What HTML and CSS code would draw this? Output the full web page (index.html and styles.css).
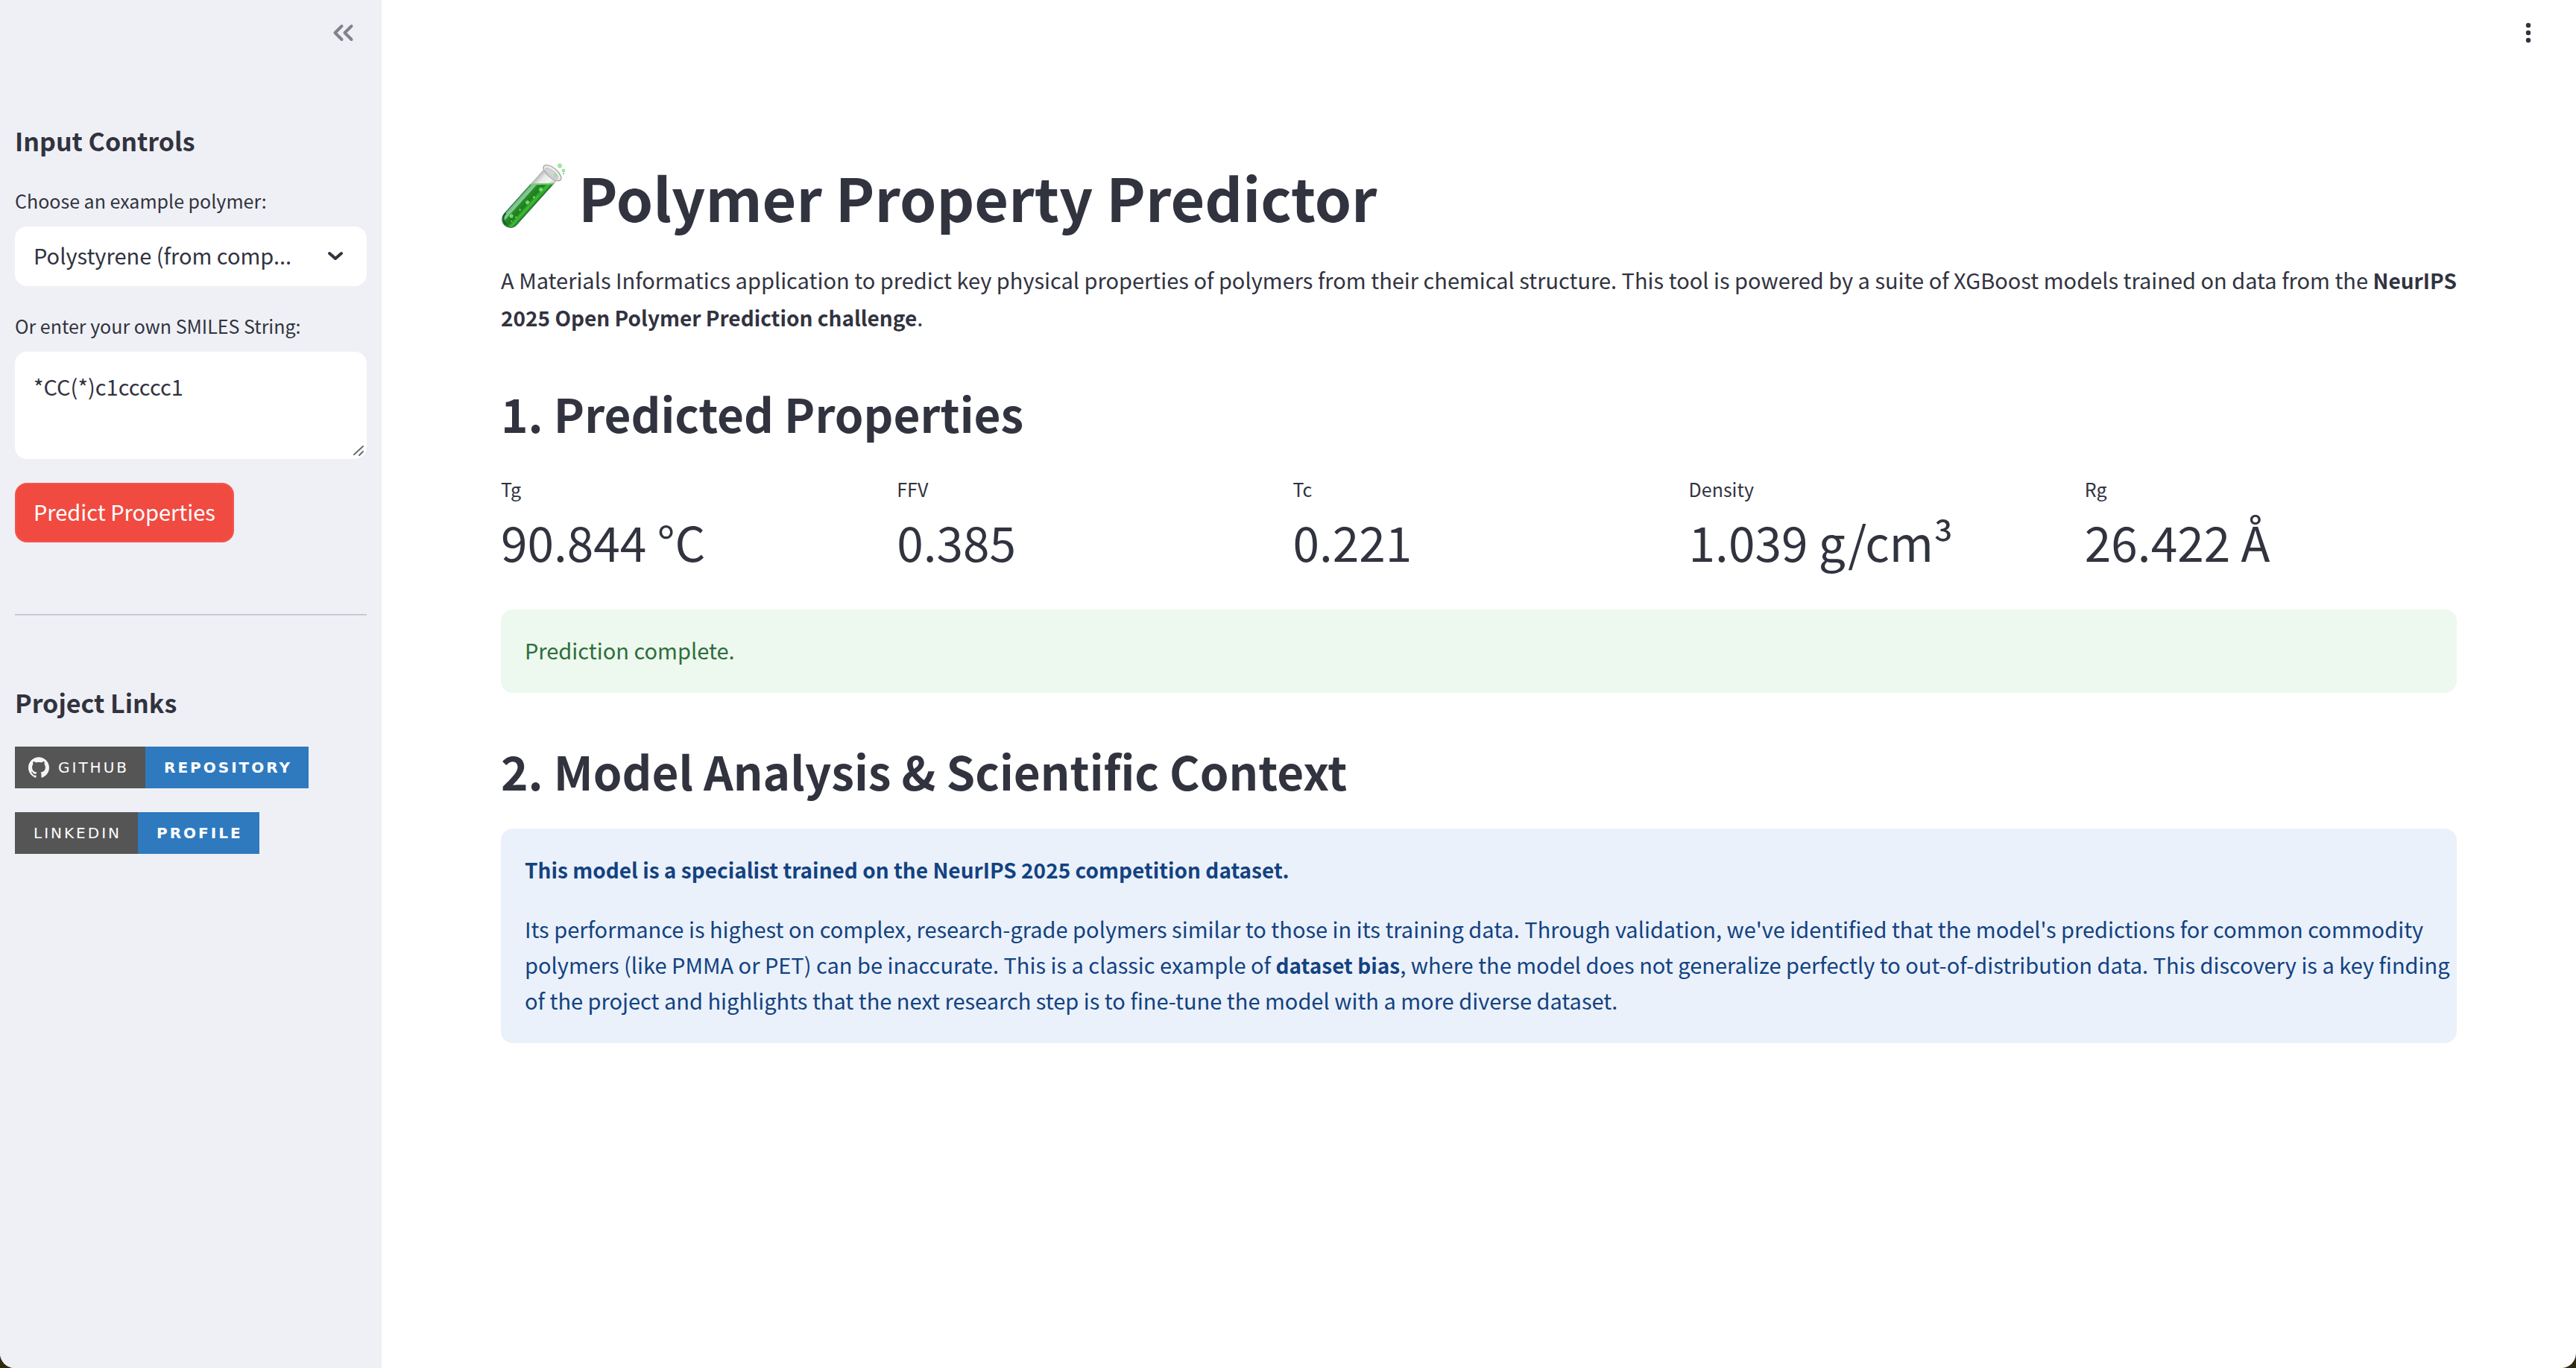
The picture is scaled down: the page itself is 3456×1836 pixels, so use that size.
FILE: index.html
```html
<!DOCTYPE html>
<html lang="en">
<head>
<meta charset="utf-8">
<title>Polymer Property Predictor</title>
<link rel="stylesheet" href="styles.css">
</head>
<body>
<div class="app">
  <aside class="sidebar">
    <div class="sidebar-header">
      <button class="icon-button" type="button" aria-label="Collapse sidebar">
        <svg width="40" height="40" viewBox="0 0 40 40" fill="none" stroke="#808389" stroke-width="4" stroke-linecap="round" stroke-linejoin="round"><path d="M18.500 11L9.500 20l9 9M31.500 11L22.500 20l9 9"/></svg>
      </button>
    </div>
    <h2 class="sidebar-title">Input Controls</h2>
    <label class="label" for="polymer">Choose an example polymer:</label>
    <div class="select-wrap">
      <select class="field select" id="polymer">
        <option>Polystyrene (from comp...</option>
      </select>
      <svg class="select-arrow" width="22" height="14" viewBox="0 0 22 14" fill="none" stroke="#31333f" stroke-width="4" stroke-linecap="round" stroke-linejoin="round"><path d="M3 3l8 7 8-7"/></svg>
    </div>
    <label class="label" for="smiles">Or enter your own SMILES String:</label>
    <div class="textarea-wrap">
      <textarea class="field textarea" id="smiles">*CC(*)c1ccccc1</textarea>
      <svg class="resize-grip" width="16" height="16" viewBox="0 0 16 16" stroke="#6a6a6a" stroke-width="2" stroke-linecap="round"><path d="M2 13L14 2M9 14l5-5"/></svg>
    </div>
    <button class="primary-button" type="button">Predict Properties</button>
    <hr class="divider">
    <h2 class="sidebar-title">Project Links</h2>
    <div class="badges">
      <a class="badge" href="#github">
        <span class="badge-name badge-name-icon"><svg width="28" height="28" viewBox="0 0 24 24" fill="#f5f5f5"><path d="M12 .297c-6.630 0-12 5.373-12 12 0 5.303 3.438 9.800 8.205 11.385.6.113.82-.258.82-.577 0-.285-.01-1.040-.015-2.040-3.338.724-4.042-1.610-4.042-1.610C4.422 18.070 3.633 17.700 3.633 17.700c-1.087-.744.084-.729.084-.729 1.205.084 1.838 1.236 1.838 1.236 1.070 1.835 2.809 1.305 3.495.998.108-.776.417-1.305.76-1.605-2.665-.3-5.466-1.332-5.466-5.930 0-1.310.465-2.380 1.235-3.220-.135-.303-.54-1.523.105-3.176 0 0 1.005-.322 3.300 1.230.96-.267 1.980-.399 3-.405 1.020.006 2.040.138 3 .405 2.280-1.552 3.285-1.230 3.285-1.230.645 1.653.24 2.873.12 3.176.765.84 1.230 1.910 1.230 3.220 0 4.610-2.805 5.625-5.475 5.920.42.360.81 1.096.81 2.220 0 1.606-.015 2.896-.015 3.286 0 .315.21.69.825.57C20.565 22.092 24 17.592 24 12.297c0-6.627-5.373-12-12-12"/></svg>GITHUB</span><span class="badge-value">REPOSITORY</span>
      </a>
      <a class="badge" href="#linkedin">
        <span class="badge-name">LINKEDIN</span><span class="badge-value">PROFILE</span>
      </a>
    </div>
  </aside>

  <main class="main">
    <header class="toolbar">
      <button class="icon-button" type="button" aria-label="Main menu">
        <svg width="40" height="40" viewBox="0 0 40 40" fill="#31333f"><circle cx="20" cy="10" r="3.200"/><circle cx="20" cy="20" r="3.200"/><circle cx="20" cy="30" r="3.200"/></svg>
      </button>
    </header>
    <div class="content">
      <h1 class="title">
        <svg class="tube" width="88" height="90" viewBox="0 0 88 90" aria-hidden="true">
          <defs>
            <linearGradient id="liquid" x1="0" y1="0" x2="1" y2="0">
              <stop offset="0" stop-color="#1d7a25"/><stop offset=".18" stop-color="#3fc234"/><stop offset=".38" stop-color="#1f7d1e"/><stop offset=".68" stop-color="#2a8a2c"/><stop offset=".76" stop-color="#8ccf98"/><stop offset="1" stop-color="#5fb878"/>
            </linearGradient>
            <linearGradient id="glass" x1="0" y1="0" x2="1" y2="0">
              <stop offset="0" stop-color="#c9cfcd"/><stop offset=".3" stop-color="#f5f7f6"/><stop offset=".7" stop-color="#e6e9e8"/><stop offset="1" stop-color="#b9bfbd"/>
            </linearGradient>
          </defs>
          <!-- The tube is drawn upright, then mirrored and tilted. -->
          <g transform="translate(67 15) rotate(42) scale(-1 1)">
            <path d="M-11 0V81a11 11 0 0 0 22 0V0z" fill="url(#glass)" stroke="#abb3b0" stroke-width="1"/>
            <path d="M-11 7L11 28V81a11 11 0 0 1-22 0z" fill="url(#liquid)" stroke="#2f6f43" stroke-width="1"/>
            <path d="M-11 7L11 28" stroke="#74cf70" stroke-width="2"/>
            <path d="M10 79a10 10 0 0 1-10 11" fill="none" stroke="#155f28" stroke-width="2"/>
            <g fill="#6ddc62" stroke="#157218" stroke-width=".6">
              <circle cx="-4" cy="24" r="3.200"/><circle cx="-2" cy="49" r="3"/><circle cx="-4" cy="38" r="2"/><circle cx="-1" cy="63" r="1.600"/><circle cx="2" cy="77" r="3"/><circle cx="-4" cy="74" r="1.600"/><circle cx="-3" cy="82" r="1.400"/><circle cx="-7" cy="30" r="1.200"/>
            </g>
          </g>
          <g transform="translate(69 13) rotate(40)">
            <ellipse rx="14.500" ry="6.500" fill="#ededed" stroke="#aaa" stroke-width="1.500"/>
            <ellipse cy="1" rx="10.500" ry="3.500" fill="#d3d6d4" stroke="#bdbdbd"/>
          </g>
          <g fill="#a8eba6" stroke="#7fd780" stroke-width=".8"><circle cx="79" cy="3.500" r="2.600"/><circle cx="84" cy="10" r="1.900"/><circle cx="84" cy="14" r="1"/><circle cx="73" cy="16" r="1.800"/></g>
        </svg>
        <span>Polymer Property Predictor</span>
      </h1>
      <p class="intro">A Materials Informatics application to predict key physical properties of polymers from their chemical structure. This tool is powered by a suite of XGBoost models trained on data from the <strong>NeurIPS 2025 Open Polymer Prediction challenge</strong>.</p>
      <h2 class="heading">1. Predicted Properties</h2>
      <dl class="metrics">
        <div class="metric"><dt>Tg</dt><dd>90.844 °C</dd></div>
        <div class="metric"><dt>FFV</dt><dd>0.385</dd></div>
        <div class="metric"><dt>Tc</dt><dd>0.221</dd></div>
        <div class="metric"><dt>Density</dt><dd>1.039 g/cm³</dd></div>
        <div class="metric"><dt>Rg</dt><dd>26.422 Å</dd></div>
      </dl>
      <div class="alert alert-success"><p>Prediction complete.</p></div>
      <h2 class="heading">2. Model Analysis &amp; Scientific Context</h2>
      <div class="alert alert-info">
        <p><strong>This model is a specialist trained on the NeurIPS 2025 competition dataset.</strong></p>
        <p>Its performance is highest on complex, research-grade polymers similar to those in its training data. Through validation, we've identified that the model's predictions for common commodity polymers (like PMMA or PET) can be inaccurate. This is a classic example of <strong>dataset bias</strong>, where the model does not generalize perfectly to out-of-distribution data. This discovery is a key finding of the project and highlights that the next research step is to fine-tune the model with a more diverse dataset.</p>
      </div>
    </div>
  </main>
</div>
</body>
</html>
```
FILE: styles.css
```css
* {
  box-sizing: border-box;
}

body {
  margin: 0;
  background: #33290f;
  color: #31333f;
  font-family: "Noto Sans CJK SC", "Noto Sans", sans-serif;
  font-size: 29px;
  line-height: 48px;
}

h1, h2, p, dl, dd {
  margin: 0;
}

strong {
  font-size: 28px;
  line-height: 1;
}

.app {
  display: flex;
  min-height: 100vh;
  overflow: hidden;
  border-radius: 0 0 20px 20px;
  background: #fff;
}

.sidebar {
  flex: 0 0 512px;
  padding: 0 20px 48px;
  background: #eff0f5;
}

.sidebar-header {
  display: flex;
  justify-content: flex-end;
  height: 164px;
  padding: 24px 12px 0 0;
}

.icon-button {
  display: block;
  width: 40px;
  height: 40px;
  padding: 0;
  border: 0;
  background: none;
}

.sidebar-title {
  margin-bottom: 34px;
  font-size: 34px;
  line-height: 50px;
}

.label {
  display: block;
  margin-bottom: 14px;
  font-size: 25px;
  line-height: 42px;
}

.field {
  display: block;
  width: 100%;
  border: 0;
  border-radius: 16px;
  background: #fff;
  color: inherit;
  font: inherit;
}

.select-wrap,
.textarea-wrap {
  position: relative;
  margin-bottom: 32px;
}

.select {
  height: 80px;
  padding: 0 76px 4px 25px;
  appearance: none;
  overflow: hidden;
  text-overflow: ellipsis;
  white-space: nowrap;
}

.select-arrow {
  position: absolute;
  top: 33px;
  right: 31px;
  pointer-events: none;
}

.textarea {
  height: 144px;
  padding: 22px 25px;
  resize: none;
}

.resize-grip {
  position: absolute;
  right: 3px;
  bottom: 3px;
}

.primary-button {
  display: block;
  height: 80px;
  padding: 0 23px 4px;
  border: 2px solid #f2564f;
  border-radius: 16px;
  background: #f04a41;
  color: #fff;
  font: inherit;
}

.divider {
  height: 2px;
  margin: 96px 0 92px;
  border: 0;
  background: #c9cad0;
}

.badges {
  display: flex;
  flex-direction: column;
  align-items: flex-start;
  gap: 32px;
}

.badge {
  display: flex;
  height: 56px;
  color: #fff;
  font-family: "DejaVu Sans", sans-serif;
  font-size: 20px;
  line-height: 56px;
  letter-spacing: 3px;
  text-decoration: none;
}

.badge-name,
.badge-value {
  display: flex;
  align-items: center;
  padding: 0 22px 0 25px;
}

.badge-name {
  background: #555;
}

.badge-name-icon {
  gap: 12px;
  padding-left: 18px;
}

.badge-value {
  background: #2f7abf;
  font-weight: 700;
}

.main {
  flex: 1;
  min-width: 0;
}

.toolbar {
  display: flex;
  justify-content: flex-end;
  height: 120px;
  padding: 24px 44px 0 0;
}

.content {
  padding: 91px 160px 96px;
}

.title {
  display: flex;
  align-items: center;
  gap: 16px;
  margin-bottom: 33px;
  font-size: 79px;
  line-height: 106px;
}

.tube {
  flex: none;
}

.intro {
  margin-right: -16px;
  line-height: 50px;
}

.heading {
  margin: 60px 0 34px;
  font-size: 62px;
  line-height: 88px;
}

.metrics {
  display: grid;
  grid-template-columns: repeat(5, 1fr);
  gap: 32px;
  margin-bottom: 49px;
  padding-top: 4px;
}

.metric dt {
  margin-bottom: 7px;
  font-size: 25px;
  line-height: 40px;
}

.metric dd {
  font-size: 64px;
  line-height: 86px;
  white-space: nowrap;
}

.alert {
  display: grid;
  gap: 32px;
  padding: 30px 0 34px 32px;
  border-radius: 16px;
}

.alert-success {
  background: #edf8ef;
  color: #2d6e3a;
}

.alert-info {
  background: #eaf1fb;
  color: #134280;
}
```
